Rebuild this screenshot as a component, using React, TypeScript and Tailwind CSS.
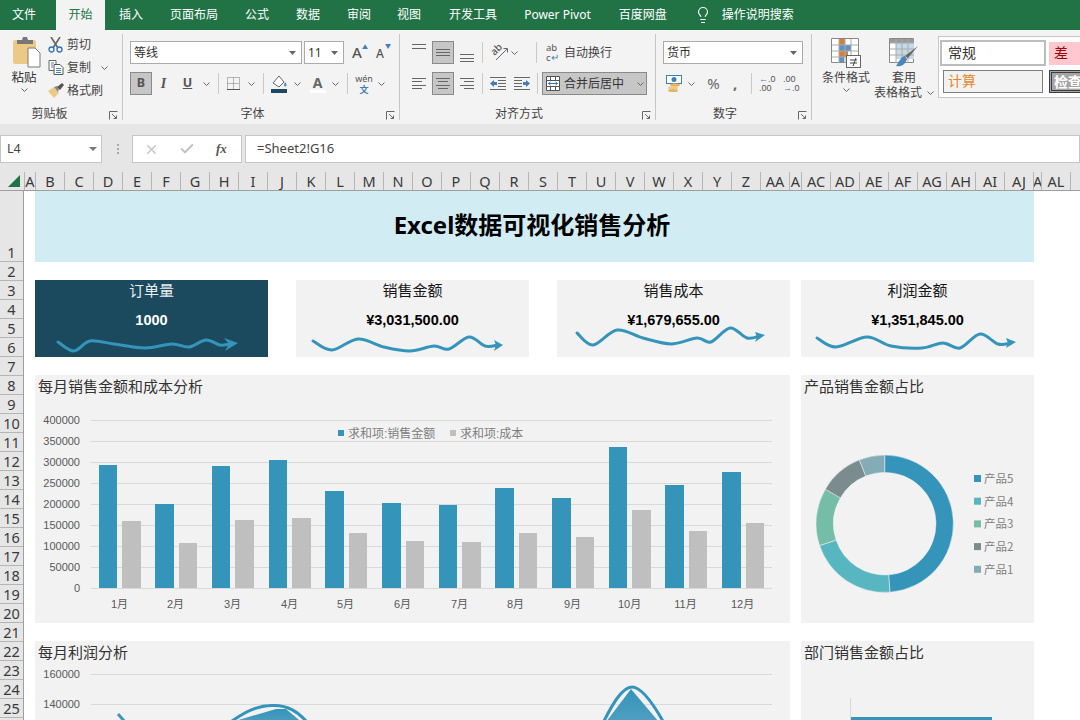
import type { ReactNode } from "react";
import { Check, Lightbulb, X } from "lucide-react";

const BLUE = "#3494ba";

// ---- ribbon bits ----------------------------------------------------------
const tabs = [
  { t: "文件", c: "ml-[12px]" },
  { t: "插入", c: "ml-[14px]" },
  { t: "页面布局", c: "ml-[27px]" },
  { t: "公式", c: "ml-[27px]" },
  { t: "数据", c: "ml-[27px]" },
  { t: "审阅", c: "ml-[27px]" },
  { t: "视图", c: "ml-[26px]" },
  { t: "开发工具", c: "ml-[28px]" },
  { t: "Power Pivot", c: "ml-[27px]" },
  { t: "百度网盘", c: "ml-[28px]" },
];

function Chev({ className = "" }: { className?: string }) {
  return (
    <svg width="7" height="4" viewBox="0 0 7 4" className={`shrink-0 ${className}`}>
      <path d="M0.5 0.5 3.5 3.5 6.5 0.5" fill="none" stroke="#666" strokeWidth="1" />
    </svg>
  );
}

function Sep({ className = "" }: { className?: string }) {
  return <div className={`h-[21px] w-px shrink-0 bg-[#c8c8c8] ${className}`} />;
}

function Launcher() {
  return (
    <svg width="9" height="9" viewBox="0 0 9 9" className="absolute bottom-[0px] right-[4px]">
      <path d="M0.5 8.5V0.5H8.5M3 3 7.5 7.5M7.5 4.5V7.5H4.5" fill="none" stroke="#666" strokeWidth="1" />
    </svg>
  );
}

function Group({ label, labelClass, className, children }: { label: string; labelClass: string; className: string; children: ReactNode }) {
  return (
    <div className={`relative flex h-[86px] shrink-0 flex-col border-r border-[#c6c6c6] ${className}`}>
      <div className="flex-1">{children}</div>
      <div className={`-mb-[2px] text-center text-[12px] leading-[16px] text-[#444] ${labelClass}`}>{label}</div>
      <Launcher />
    </div>
  );
}

function Select({ text, w }: { text: string; w: string }) {
  return (
    <div className={`flex h-[23px] shrink-0 items-center justify-between border border-[#ababab] bg-white pl-[3px] pr-[5px] ${w}`}>
      <span className="text-[12px] text-[#333]">{text}</span>
      <svg width="7" height="4" viewBox="0 0 7 4">
        <path d="M0 0H7L3.5 4Z" fill="#666" />
      </svg>
    </div>
  );
}

function Lines({ ys, xs }: { ys: number[]; xs: [number, number][] }) {
  return (
    <svg width="14" height="21" viewBox="0 0 14 21" className="shrink-0">
      {ys.map((y, i) => (
        <line key={y} x1={xs[i][0]} x2={xs[i][1]} y1={y + 0.5} y2={y + 0.5} stroke="#666" strokeWidth="1" />
      ))}
    </svg>
  );
}

function Pressed({ children, className = "" }: { children: ReactNode; className?: string }) {
  return (
    <div className={`flex h-[23px] shrink-0 items-center justify-center border border-[#8a8a8a] bg-[#c6c6c6] ${className}`}>
      {children}
    </div>
  );
}

const full: [number, number][] = [[0, 14], [0, 14], [0, 14]];
const leftL: [number, number][] = [[0, 14], [0, 10], [0, 14], [0, 10]];
const centerL: [number, number][] = [[0, 14], [2, 12], [0, 14], [2, 12]];
const rightL: [number, number][] = [[0, 14], [4, 14], [0, 14], [4, 14]];

function ClipboardIcon() {
  return (
    <svg width="28" height="31" viewBox="0 0 28 31">
      <rect x="0" y="3" width="23" height="24" rx="2" fill="#edc987" />
      <path d="M4 3h5l1-3h4l1 3h5v4H4Z" fill="#777" />
      <path d="M15 11h7l5 5v14H15Z" fill="#fff" stroke="#7b7b7b" />
    </svg>
  );
}
function ScissorsIcon() {
  return (
    <svg width="16" height="16" viewBox="0 0 16 16" className="shrink-0">
      <path d="M3 0 10 11M12 0 5 11" stroke="#666" strokeWidth="1.6" fill="none" />
      <circle cx="3.5" cy="12.5" r="2.5" fill="none" stroke="#2f75b5" strokeWidth="1.3" />
      <circle cx="11.5" cy="12.5" r="2.5" fill="none" stroke="#2f75b5" strokeWidth="1.3" />
    </svg>
  );
}
function CopyIcon() {
  return (
    <svg width="16" height="15" viewBox="0 0 16 15" className="shrink-0">
      <path d="M1 .5h7v10H1Z" fill="#fff" stroke="#666" />
      <path d="M6 4.5h6l3 3v7H6Z" fill="#fff" stroke="#555" />
      <path d="M8 8.5h5M8 10.5h5M8 12.5h5M3 3h3M3 5h2M3 7h2" stroke="#4a86b8" strokeWidth="1" />
    </svg>
  );
}
function BrushIcon() {
  return (
    <svg width="16" height="15" viewBox="0 0 16 15" className="shrink-0">
      <path d="M0 8 6 4l5 6-5 5Z" fill="#edc987" />
      <path d="M6 4l3-1 2 3-1 3Z" fill="#888" />
      <path d="M9 4l5-4 2 2-4 5Z" fill="#555" />
    </svg>
  );
}
function BorderIcon() {
  return (
    <svg width="13" height="13" viewBox="0 0 13 13">
      <path d="M.5.5h12v12H.5ZM6.5.5v12M.5 6.5h12" fill="none" stroke="#777" strokeDasharray="1 1" />
      <path d="M0 12.5h13" stroke="#555" />
    </svg>
  );
}
function FillIcon() {
  return (
    <svg width="17" height="18" viewBox="0 0 17 18">
      <path d="M2 8 8 1l5 6-5 5Z" fill="#fff" stroke="#666" />
      <path d="M14 7c1.500 2 2 3 1 4s-2 0-2-1Z" fill="#4a86b8" />
      <rect x="0" y="14" width="16" height="4" fill="#1b4a5e" />
    </svg>
  );
}
function MoneyIcon() {
  return (
    <svg width="16" height="17" viewBox="0 0 16 17">
      <rect x=".5" y=".5" width="15" height="8" fill="#fff" stroke="#3f7fb5" />
      <circle cx="8" cy="4.500" r="2.500" fill="#3f7fb5" />
      <ellipse cx="9" cy="10" rx="5" ry="1.700" fill="#e3b563" />
      <ellipse cx="7" cy="13" rx="5" ry="1.700" fill="#edc987" />
      <ellipse cx="7" cy="15.500" rx="5" ry="1.500" fill="#e3b563" />
    </svg>
  );
}
function MergeIcon() {
  return (
    <svg width="14" height="15" viewBox="0 0 14 15" className="shrink-0">
      <path d="M.5.5h13v14H.5ZM.5 4.500h13M.5 10.500h13M4.500.5v4M9.500.5v4M4.500 10.500v4M9.500 10.500v4" fill="#fff" stroke="#555" />
      <path d="M2.500 7.500h9M2.500 7.500l2-1.500M2.500 7.500l2 1.500M11.500 7.500l-2-1.500M11.500 7.500l-2 1.500" fill="none" stroke="#2f75b5" />
    </svg>
  );
}
function IndentIcon({ flip }: { flip?: boolean }) {
  return (
    <svg width="16" height="13" viewBox="0 0 16 13" className={flip ? "-scale-x-100" : ""}>
      <path d="M0 .5h16M8 3.500h8M8 6.500h8M8 9.500h8M0 12.500h16" stroke="#666" />
      <path d="M0 6.500 4 3v2h3v3H4v2Z" fill="#3f7fb5" />
    </svg>
  );
}
// slanted "ab" sitting on a rising arrow
function OrientIcon() {
  return (
    <div className="relative h-[17px] w-[17px]">
      <span className="absolute left-[-1px] top-[-1px] block -rotate-45 text-[10px] font-medium leading-[12px] text-[#555]">ab</span>
      <svg width="17" height="17" viewBox="0 0 17 17" className="absolute inset-0">
        <path d="M5 16 16 5M12.500 4.500H16.500V8.500" fill="none" stroke="#666" strokeWidth="1" />
      </svg>
    </div>
  );
}
function CondIcon() {
  return (
    <svg width="30" height="30" viewBox="0 0 30 30">
      <path d="M.5.5h27v24H.5Z" fill="#fff" stroke="#888" />
      <rect x="8" y="1" width="6" height="6" fill="#d2803a" />
      <rect x="8" y="7" width="12" height="6" fill="#5b93c4" />
      <rect x="8" y="13" width="9" height="6" fill="#d2803a" />
      <rect x="8" y="19" width="5" height="5" fill="#5b93c4" />
      <path d="M8 1v24M14 1v24M20 1v24M1 7h26M1 13h26M1 19h26" stroke="#aaa" fill="none" />
      <rect x="15.500" y="17.500" width="14" height="12" fill="#fff" stroke="#666" />
      <path d="M19 22h7M19 25h7M25 20l-3 8" stroke="#444" fill="none" />
    </svg>
  );
}
function TableIcon() {
  return (
    <svg width="30" height="30" viewBox="0 0 30 30">
      <path d="M.5.5h24v24H.5Z" fill="#fff" stroke="#888" />
      <rect x="1" y="1" width="24" height="4" fill="#999" />
      <rect x="7" y="5" width="18" height="16" fill="#c5d9e6" />
      <path d="M7 1v24M13 1v24M19 1v24M1 5h24M1 11h24M1 17h24" stroke="#aaa" fill="none" />
      <path d="M29 8 19 20l-3-2Z" fill="#666" />
      <path d="M16 18c-3 0-6 5-9 10 5 1 9-1 11-7Z" fill="#4a86b8" />
    </svg>
  );
}

function Ribbon() {
  return (
    <div className="flex h-[94px] bg-[#f3f3f3] pt-[4px]">
      <Group label="剪贴板" labelClass="pr-[23px]" className="w-[123px]">
        <div className="flex">
          <div className="ml-[8px] flex w-[32px] flex-col items-center pt-[3px]">
            <div className="ml-[5px]"><ClipboardIcon /></div>
            <div className="mt-[2px] text-[12.500px] leading-[16px] text-[#333]">粘贴</div>
            <Chev className="mt-[2px]" />
          </div>
          <div className="ml-[8px] -mt-[1px] flex flex-col">
            <div className="flex h-[23px] items-center gap-[3px] text-[12px] text-[#444]">
              <ScissorsIcon />剪切
            </div>
            <div className="flex h-[23px] items-center gap-[3px] text-[12px] text-[#444]">
              <CopyIcon />复制<Chev className="ml-[7px]" />
            </div>
            <div className="flex h-[23px] items-center gap-[3px] text-[12px] text-[#444]">
              <BrushIcon />格式刷
            </div>
          </div>
        </div>
      </Group>

      <Group label="字体" labelClass="pr-[24px]" className="w-[277px] pl-[7px] pt-[7px]">
        <div className="flex h-[23px] items-center">
          <Select text="等线" w="w-[172px]" />
          <Select text="11" w="w-[40px] ml-[2px]" />
          <div className="relative ml-[8px] w-[14px] text-[15px] font-medium leading-none text-[#555]">
            A<span className="absolute -top-[1px] left-[10px] text-[6px] text-[#3f7fb5]">▲</span>
          </div>
          <div className="relative ml-[10px] w-[14px] pt-[2px] text-[12px] font-medium leading-none text-[#555]">
            A<span className="absolute -top-[3px] left-[9px] text-[6px] text-[#3f7fb5]">▼</span>
          </div>
        </div>
        <div className="mt-[8px] flex h-[23px] items-center">
          <Pressed className="w-[22px] text-[12.500px] font-bold text-[#555]">B</Pressed>
          <div className="ml-[3px] w-[17px] text-center font-['Liberation_Serif',serif] text-[14px] font-bold italic text-[#555]">I</div>
          <div className="ml-[6px] w-[19px] text-center text-[12.500px] font-bold text-[#555] underline">U</div>
          <Chev className="ml-[6px]" />
          <Sep className="ml-[8px]" />
          <div className="ml-[8px] w-[13px]"><BorderIcon /></div>
          <Chev className="ml-[8px]" />
          <Sep className="ml-[8px]" />
          <div className="ml-[7px] w-[17px]"><FillIcon /></div>
          <Chev className="ml-[6px]" />
          <div className="ml-[8px] flex w-[17px] flex-col items-center text-[14px] font-bold leading-[15px] text-[#666]">
            A<div className="h-[3px] w-[16px] bg-white" />
          </div>
          <Chev className="ml-[6px]" />
          <Sep className="ml-[8px]" />
          <div className="ml-[7px] flex w-[18px] flex-col items-center">
            <span className="h-[11px] text-[9px] leading-[11px] text-[#555]">wén</span>
            <span className="h-[11px] text-[9px] font-bold leading-[11px] text-[#3f7fb5]">文</span>
          </div>
          <Chev className="ml-[5px]" />
        </div>
      </Group>

      <Group label="对齐方式" labelClass="pr-[29px]" className="w-[256px] pl-[12px] pt-[7px]">
        <div className="flex h-[23px] items-center">
          <Lines ys={[2, 6]} xs={full} />
          <Pressed className="ml-[6px] w-[22px]"><Lines ys={[7, 10, 13]} xs={full} /></Pressed>
          <div className="ml-[6px]"><Lines ys={[12, 16, 19]} xs={full} /></div>
          <Sep className="ml-[8px]" />
          <div className="ml-[8px] w-[17px]"><OrientIcon /></div>
          <Chev className="ml-[3px]" />
          <Sep className="ml-[18px]" />
          <div className="ml-[9px] flex w-[14px] flex-col text-[9.500px] text-[#555]">
            <span className="h-[10px] leading-[10px]">ab</span>
            <span className="h-[10px] leading-[10px]">c<span className="text-[#3f7fb5]">↵</span></span>
          </div>
          <div className="ml-[4px] text-[12px] text-[#444]">自动换行</div>
        </div>
        <div className="mt-[8px] flex h-[23px] items-center">
          <Lines ys={[5, 8, 12, 15]} xs={leftL} />
          <Pressed className="ml-[6px] w-[22px]"><Lines ys={[5, 8, 12, 15]} xs={centerL} /></Pressed>
          <div className="ml-[6px]"><Lines ys={[5, 8, 12, 15]} xs={rightL} /></div>
          <Sep className="ml-[8px]" />
          <div className="ml-[7px]"><IndentIcon /></div>
          <div className="ml-[8px]"><IndentIcon flip /></div>
          <Sep className="ml-[7px]" />
          <Pressed className="ml-[4px] w-[105px] justify-start pl-[3px]">
            <MergeIcon />
            <span className="ml-[4px] whitespace-nowrap text-[12px] text-[#333]">合并后居中</span>
            <Chev className="ml-[13px]" />
          </Pressed>
        </div>
      </Group>

      <Group label="数字" labelClass="pr-[24px]" className="w-[156px] pl-[7px] pt-[7px]">
        <Select text="货币" w="w-[140px]" />
        <div className="mt-[8px] flex h-[23px] items-center">
          <div className="ml-[3px] w-[16px]"><MoneyIcon /></div>
          <Chev className="ml-[6px]" />
          <div className="ml-[11px] w-[15px] text-center text-[15px] text-[#666]">%</div>
          <div className="ml-[12px] w-[6px] text-[15px] font-bold leading-[15px] text-[#666]">,</div>
          <Sep className="ml-[12px]" />
          <div className="ml-[7px] flex w-[16px] flex-col font-['Liberation_Sans',sans-serif] text-[9px] text-[#555]">
            <span className="h-[9px] leading-[9px]"><span className="text-[#3f7fb5]">←</span>.0</span>
            <span className="h-[9px] leading-[9px]">.00</span>
          </div>
          <div className="ml-[8px] flex w-[16px] flex-col font-['Liberation_Sans',sans-serif] text-[9px] text-[#555]">
            <span className="h-[9px] leading-[9px]">.00</span>
            <span className="h-[9px] leading-[9px]"><span className="text-[#3f7fb5]">→</span>.0</span>
          </div>
        </div>
      </Group>

      <div className="flex h-[86px] flex-1 pl-[5px]">
        <div className="flex w-[58px] flex-col items-center pt-[4px]">
          <CondIcon />
          <div className="mt-[2px] text-[12px] leading-[15px] text-[#444]">条件格式</div>
          <Chev className="mt-[3px]" />
        </div>
        <div className="flex w-[58px] flex-col items-center pt-[4px]">
          <TableIcon />
          <div className="mt-[2px] text-[12px] leading-[15px] text-[#444]">套用</div>
          <div className="relative mr-[12px] whitespace-nowrap text-[12px] leading-[15px] text-[#444]">
            表格格式<Chev className="absolute left-[53px] top-[6px]" />
          </div>
        </div>
        <div className="ml-[5px] mt-[2px] flex h-[62px] w-[160px] shrink-0 flex-col border border-[#c6c6c6] bg-white pl-[1px] pt-[3px]">
          <div className="flex">
            <div className="flex h-[26px] w-[106px] items-center border-[2px] border-[#bdbdbd] pb-[2px] pl-[6px] text-[14px] text-[#333]">常规</div>
            <div className="ml-[3px] mt-[2px] flex h-[23px] w-[40px] items-center bg-[#ffc7ce] pb-[2px] pl-[5px] text-[14px] text-[#9c0006]">差</div>
          </div>
          <div className="mt-[4px] flex">
            <div className="ml-[3px] flex h-[23px] w-[100px] items-center border border-[#7f7f7f] bg-[#f2f2f2] pb-[2px] pl-[4px] text-[14px] text-[#e8862c]">计算</div>
            <div className="ml-[6px] flex h-[23px] w-[40px] items-center border-[3px] border-double border-[#3f3f3f] bg-[#a5a5a5] pl-[2px] text-[14px] font-bold text-white">检查</div>
          </div>
        </div>
      </div>
    </div>
  );
}

function FormulaBar() {
  return (
    <div className="h-[48px] bg-[#e6e6e6] pt-[11px]">
      <div className="flex h-[28px]">
        <div className="flex w-[102px] items-center justify-between border border-[#c6c6c6] bg-white pl-[6px] pr-[4px] text-[12.500px] text-[#444]">
          L4
          <svg width="8" height="4" viewBox="0 0 8 4"><path d="M0 0H8L4 4Z" fill="#777" /></svg>
        </div>
        <div className="flex w-[30px] flex-col items-center justify-center gap-[2px] pl-[1px]">
          <i className="h-[2px] w-[2px] bg-[#aaa]" />
          <i className="h-[2px] w-[2px] bg-[#aaa]" />
          <i className="h-[2px] w-[2px] bg-[#aaa]" />
        </div>
        <div className="flex w-[110px] items-center border border-[#c6c6c6] bg-white">
          <X size={15} className="ml-[11px] text-[#c2c2c2]" />
          <Check size={16} strokeWidth={3} className="ml-[20px] text-[#c2c2c2]" />
          <span className="ml-[21px] font-['Liberation_Serif',serif] text-[13px] font-bold italic text-[#555]">fx</span>
        </div>
        <div className="ml-[3px] flex flex-1 items-center border border-[#c6c6c6] bg-white pl-[11px] text-[13px] text-[#444]">
          =Sheet2!G16
        </div>
      </div>
    </div>
  );
}

// ---- sheet headers --------------------------------------------------------
const cols: [string, string][] = [
  ["A", "w-[11px]"],
  ..."BCDEFGHIJKLMNOPQRSTUVWXYZ".split("").map((c): [string, string] => [c, "w-[29px]"]),
  ["AA", "w-[29px]"],
  ["A", "w-[12px]"],
  ...["AC", "AD", "AE", "AF", "AG", "AH", "AI", "AJ"].map((c): [string, string] => [c, "w-[29px]"]),
  ["A", "w-[8px]"],
  ["AL", "w-[29px]"],
  ["A", "w-[29px]"],
];

function ColumnHeader() {
  return (
    <div className="flex h-[19px] border-b border-[#9f9f9f] bg-[#e6e6e6]">
      <div className="flex w-[25px] shrink-0 items-end justify-end border-r border-[#b5b5b5] pb-[3px] pr-[4px]">
        <svg width="12" height="12" viewBox="0 0 12 12"><path d="M12 0V12H0Z" fill="#217346" /></svg>
      </div>
      {cols.map(([c, w], i) => (
        <div
          key={i}
          className={`flex h-full shrink-0 justify-center overflow-hidden border-r border-[#b5b5b5] text-[14.500px] leading-[19px] text-[#3a3a3a] ${w}`}
        >
          {c}
        </div>
      ))}
    </div>
  );
}

function RowHeader() {
  const rows = Array.from({ length: 26 }, (_, i) => i + 1);
  return (
    <div className="w-[24px] shrink-0 border-r border-[#9f9f9f] bg-[#e6e6e6]">
      {rows.map((r) => (
        <div
          key={r}
          className={`flex items-end justify-center border-b border-[#b5b5b5] text-[14.500px] leading-[18px] text-[#3a3a3a] ${r === 1 ? "h-[71px]" : "h-[19px]"}`}
        >
          {r}
        </div>
      ))}
    </div>
  );
}

// ---- drawing helpers ------------------------------------------------------
function smooth(p: [number, number][]) {
  let d = `M${p[0][0]} ${p[0][1]}`;
  for (let i = 0; i < p.length - 1; i++) {
    const p0 = p[Math.max(i - 1, 0)];
    const p1 = p[i];
    const p2 = p[i + 1];
    const p3 = p[Math.min(i + 2, p.length - 1)];
    const c1x = p1[0] + (p2[0] - p0[0]) / 6;
    const c1y = p1[1] + (p2[1] - p0[1]) / 6;
    const c2x = p2[0] - (p3[0] - p1[0]) / 6;
    const c2y = p2[1] - (p3[1] - p1[1]) / 6;
    d += ` C${c1x} ${c1y} ${c2x} ${c2y} ${p2[0]} ${p2[1]}`;
  }
  return d;
}

type Kpi = {
  title: string;
  value: string;
  x: number;
  pts: [number, number][];
  head: string;
  cls: string;
};

const kpis: Kpi[] = [
  {
    title: "订单量",
    value: "1000",
    x: 35,
    cls: "bg-[#1b4a5e] text-white",
    pts: [[58, 342], [74, 351], [90, 341], [114, 344], [145, 348], [172, 344], [189, 347], [206, 340], [220, 345], [232, 344]],
    head: "M238 343 224 338 229 344 225 351Z",
  },
  {
    title: "销售金额",
    value: "¥3,031,500.00",
    x: 296,
    cls: "ml-[28px] bg-[#f2f2f2] text-black",
    pts: [[313, 341], [332, 350], [358, 339], [384, 347], [410, 351], [434, 346], [449, 349], [469, 337], [485, 346], [498, 345]],
    head: "M503 345 494 340 496 345 494 351Z",
  },
  {
    title: "销售成本",
    value: "¥1,679,655.00",
    x: 557,
    cls: "ml-[28px] bg-[#f2f2f2] text-black",
    pts: [[577, 333], [593, 345], [617, 330], [643, 338], [671, 344], [697, 338], [711, 342], [730, 328], [747, 338], [760, 336]],
    head: "M765 335 755 332 757 337 755 342Z",
  },
  {
    title: "利润金额",
    value: "¥1,351,845.00",
    x: 801,
    cls: "ml-[11px] bg-[#f2f2f2] text-black",
    pts: [[817, 338], [836, 347], [867, 337], [891, 346], [922, 348], [943, 343], [960, 348], [980, 334], [998, 344], [1011, 343]],
    head: "M1016 342 1006 338 1008 343 1006 348Z",
  },
];

function KpiCard({ k }: { k: Kpi }) {
  return (
    <div className={`relative h-[77px] w-[233px] shrink-0 text-center ${k.cls}`}>
      <div className="text-[15px] leading-[20px] opacity-90">{k.title}</div>
      <div className="mt-[10px] font-['Liberation_Sans',sans-serif] text-[14.500px] font-bold leading-[20px]">{k.value}</div>
      <svg className="absolute inset-0" width="233" height="77" viewBox={`${k.x} 280 233 77`}>
        <path d={smooth(k.pts)} fill="none" stroke={BLUE} strokeWidth="3" strokeLinecap="round" />
        <path d={k.head} fill={BLUE} />
      </svg>
    </div>
  );
}

const grid = [420, 441, 462, 483, 504, 525, 546, 567, 588];
const axis = ["400000", "350000", "300000", "250000", "200000", "150000", "100000", "50000", "0"];
const sales = [
  [99, 117, 465], [155, 174, 504], [212, 230, 466], [269, 287, 460], [325, 344, 491], [382, 401, 503],
  [439, 457, 505], [495, 514, 488], [552, 571, 498], [609, 627, 447], [665, 684, 485], [722, 741, 472],
];
const cost = [
  [122, 141, 521], [179, 197, 543], [235, 254, 520], [292, 311, 518], [349, 367, 533], [406, 424, 541],
  [462, 481, 542], [519, 537, 533], [576, 594, 537], [632, 651, 510], [689, 707, 531], [746, 764, 523],
];

function BarChart() {
  return (
    <svg width="755" height="226" viewBox="35 397 755 226" className="block font-['Liberation_Sans','Noto_Sans_CJK_SC',sans-serif]">
      {grid.map((y, i) => (
        <g key={y}>
          <line x1="91" x2="772" y1={y + 0.5} y2={y + 0.5} stroke="#d9d9d9" />
          <text x="80" y={y + 4} textAnchor="end" fontSize="11" fill="#595959">{axis[i]}</text>
        </g>
      ))}
      {sales.map(([a, b, t]) => (
        <rect key={a} x={a} y={t} width={b - a} height={588 - t} fill={BLUE} />
      ))}
      {cost.map(([a, b, t]) => (
        <rect key={a} x={a} y={t} width={b - a} height={588 - t} fill="#bfbfbf" />
      ))}
      {sales.map(([a], i) => (
        <text key={a} x={a + 20.500} y={608} textAnchor="middle" fontSize="11" fill="#595959">{i + 1}月</text>
      ))}
      <rect x="338" y="430" width="6" height="6" fill={BLUE} />
      <text x="348" y="438" fontSize="12" fill="#7f7f7f">求和项:销售金额</text>
      <rect x="450" y="430" width="6" height="6" fill="#bfbfbf" />
      <text x="460" y="438" fontSize="12" fill="#7f7f7f">求和项:成本</text>
    </svg>
  );
}

const slices = [
  { n: "产品5", c: "#3494ba", a: 0, b: 175.6 },
  { n: "产品4", c: "#58b6c0", a: 175.6, b: 251.4 },
  { n: "产品3", c: "#75bda7", a: 251.4, b: 300.2 },
  { n: "产品2", c: "#7a8c8e", a: 300.2, b: 338.3 },
  { n: "产品1", c: "#84acb6", a: 338.3, b: 360 },
];

function arc(a: number, b: number) {
  const cx = 884.7;
  const cy = 523.7;
  const R = 68.7;
  const r = 51.3;
  const pt = (rad: number, deg: number) => {
    const t = (deg * Math.PI) / 180;
    return `${cx + rad * Math.sin(t)} ${cy - rad * Math.cos(t)}`;
  };
  const large = b - a > 180 ? 1 : 0;
  return `M${pt(R, a)} A${R} ${R} 0 ${large} 1 ${pt(R, b)} L${pt(r, b)} A${r} ${r} 0 ${large} 0 ${pt(r, a)}Z`;
}

function Donut() {
  return (
    <svg width="233" height="226" viewBox="801 397 233 226" className="block font-['Noto_Sans_CJK_SC',sans-serif]">
      {slices.map((s, i) => (
        <g key={s.n}>
          <path d={arc(s.a, s.b)} fill={s.c} stroke="#f2f2f2" strokeWidth="0.500" />
          <rect x="974" y={475 + i * 22.700} width="7" height="7" fill={s.c} />
          <text x="984" y={483 + i * 22.700} fontSize="11.500" fill="#7f7f7f">{s.n}</text>
        </g>
      ))}
    </svg>
  );
}

function ProfitChart() {
  return (
    <svg width="755" height="78" viewBox="35 663 755 78" className="block font-['Liberation_Sans',sans-serif]">
      <defs>
        <linearGradient id="peak" x1="0" x2="0" y1="0" y2="1">
          <stop offset="0" stopColor="#3494ba" />
          <stop offset="1" stopColor="#4f9fc0" />
        </linearGradient>
      </defs>
      {[674, 704].map((y, i) => (
        <g key={y}>
          <line x1="91" x2="772" y1={y + 0.5} y2={y + 0.5} stroke="#d9d9d9" />
          <text x="80" y={y + 4} textAnchor="end" fontSize="11" fill="#595959">{i === 0 ? "160000" : "140000"}</text>
        </g>
      ))}
      <path d="M118 714 126 723" stroke="#3f97bd" strokeWidth="3" fill="none" />
      <path d="M229 723C245 712 258 705 273 705.500C288 705 298 712 308 723" fill="none" stroke="#3494ba" strokeWidth="3" />
      <path d="M235 721 276 709 286 709 305 725Z" fill="url(#peak)" />
      <path d="M603 723C612 705 622 687 632 687C642 687 654 705 664 723" fill="none" stroke="#3494ba" strokeWidth="3" />
      <path d="M631 689 606 722H659Z" fill="url(#peak)" />
    </svg>
  );
}

function Title({ children }: { children: ReactNode }) {
  return <div className="h-[22px] pl-[3px] text-[15px] leading-[22px] text-[#333]">{children}</div>;
}

export default function App() {
  return (
    <div className="flex h-[720px] w-[1080px] flex-col overflow-hidden bg-white font-['Noto_Sans','Noto_Sans_CJK_SC',sans-serif]">
      <div className="flex h-[30px] shrink-0 items-center bg-[#217346] text-[12px] text-white">
        <span className={tabs[0].c}>{tabs[0].t}</span>
        <span className="ml-[20px] flex h-full w-[49px] items-center justify-center bg-[#f3f3f3] text-[#217346]">开始</span>
        {tabs.slice(1).map((t) => (
          <span key={t.t} className={t.c}>{t.t}</span>
        ))}
        <Lightbulb size={18} strokeWidth={1.500} className="ml-[27px]" />
        <span className="ml-[10px]">操作说明搜索</span>
      </div>
      <Ribbon />
      <FormulaBar />
      <ColumnHeader />
      <div className="flex flex-1 overflow-hidden">
        <RowHeader />
        <div className="flex-1 pl-[11px]">
          <div className="flex h-[71px] w-[999px] items-center justify-center bg-[#d2ecf4] pb-[4px] pr-[5px] text-[24px] font-bold text-black">
            Excel数据可视化销售分析
          </div>
          <div className="mt-[18px] flex">
            {kpis.map((k) => <KpiCard key={k.title} k={k} />)}
          </div>
          <div className="mt-[18px] flex h-[248px]">
            <div className="w-[755px] bg-[#f2f2f2]">
              <Title>每月销售金额和成本分析</Title>
              <BarChart />
            </div>
            <div className="ml-[11px] w-[233px] bg-[#f2f2f2]">
              <Title>产品销售金额占比</Title>
              <Donut />
            </div>
          </div>
          <div className="mt-[18px] flex h-[100px]">
            <div className="w-[755px] bg-[#f2f2f2]">
              <Title>每月利润分析</Title>
              <ProfitChart />
            </div>
            <div className="ml-[11px] w-[233px] bg-[#f2f2f2]">
              <Title>部门销售金额占比</Title>
              <svg width="233" height="78" viewBox="801 663 233 78" className="block">
                <line x1="850.500" x2="850.500" y1="698" y2="741" stroke="#d9d9d9" />
                <rect x="851" y="717" width="141" height="20" fill={BLUE} />
              </svg>
            </div>
          </div>
        </div>
      </div>
    </div>
  );
}
